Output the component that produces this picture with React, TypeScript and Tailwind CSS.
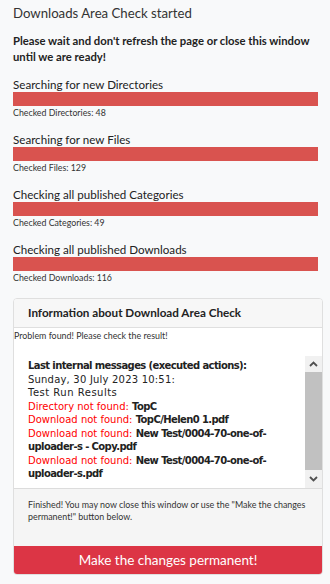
import React from "react";

const sans = "font-['Lato',sans-serif]";
const verdana = "font-['DejaVu_Sans',sans-serif]";

interface Step {
  title: string;
  checked: string;
}

const steps: Step[] = [
  { title: "Searching for new Directories", checked: "Checked Directories: 48" },
  { title: "Searching for new Files", checked: "Checked Files: 129" },
  { title: "Checking all published Categories", checked: "Checked Categories: 49" },
  { title: "Checking all published Downloads", checked: "Checked Downloads: 116" },
];

const ProgressStep = ({ step }: { step: Step }) => (
  <div className="mt-[13px] first:mt-[12px]">
    <div className="text-[11.6px] leading-[14px] text-[#222]">{step.title}</div>
    <div className="h-[14px] w-[305px] bg-[#d9534f]" />
    <div className="text-[8.8px] leading-[14px] text-[#333]">{step.checked}</div>
  </div>
);

const Missing = ({ label, path }: { label: string; path: string }) => (
  <div>
    <span className="text-[#ff0000]">{label} </span>
    <span className="font-bold text-[#222] tracking-[-0.6px]">{path}</span>
  </div>
);

const Scrollbar = () => (
  <div className="w-[17px] flex flex-col bg-[#f1f1f1]">
    <div className="h-[16px] flex items-center justify-center">
      <svg width="9" height="6" viewBox="0 0 9 6">
        <path d="M1 5 L4.5 1.5 L8 5" fill="none" stroke="#505050" strokeWidth="1.8" />
      </svg>
    </div>
    <div className="flex-1 bg-[#c1c1c1]" />
    <div className="h-[18px] flex items-center justify-center">
      <svg width="9" height="6" viewBox="0 0 9 6">
        <path d="M1 1 L4.5 4.5 L8 1" fill="none" stroke="#505050" strokeWidth="1.8" />
      </svg>
    </div>
  </div>
);

export default function App() {
  return (
    <div className={`min-h-[584px] w-[330px] bg-[#f8f9fa] px-[13px] pt-[3px] ${sans}`}>
      <h1 className="text-[13.2px] leading-[20px] font-normal text-[#333]">
        Downloads Area Check started
      </h1>
      <p className="mt-[10px] text-[11.3px] leading-[16px] font-bold text-[#222]">
        Please wait and don't refresh the page or close this window until we are ready!
      </p>

      {steps.map((s, idx) => (
        <ProgressStep key={idx} step={s} />
      ))}

      <div className="mt-[13px] w-[310px] rounded-[4px] border border-[#dfdfdf] bg-white overflow-hidden">
        <div className="h-[29px] bg-[#f7f7f7] border-b border-[#dfdfdf] flex items-center pl-[14px]">
          <span className="text-[11.7px] font-bold text-[#222]">Information about Download Area Check</span>
        </div>
        <div className="pt-[1px] text-[8.9px] leading-[13px] text-[#333]">
          Problem found! Please check the result!
        </div>
        <div className="mt-[14px] h-[133px] flex border-b border-[#dcdcdc]">
          <div className={`flex-1 pl-[14px] pt-[3px] text-[10px] leading-[13.5px] text-[#222] ${verdana}`}>
            <div className="font-bold tracking-[-0.6px]">Last internal messages (executed actions):</div>
            <div className="tracking-[0.2px]">Sunday, 30 July 2023 10:51:</div>
            <div className="tracking-[0.5px]">Test Run Results</div>
            <Missing label="Directory not found:" path="TopC" />
            <Missing label="Download not found:" path="TopC/Helen0 1.pdf" />
            <Missing label="Download not found:" path="New Test/0004-70-one-of-uploader-s - Copy.pdf" />
            <Missing label="Download not found:" path="New Test/0004-70-one-of-uploader-s.pdf" />
          </div>
          <Scrollbar />
        </div>
        <div className="bg-[#f5f5f5] pl-[14px] pr-[8px] pt-[10px] pb-[23px] text-[8.9px] leading-[12px] text-[#333]">
          Finished! You may now close this window or use the "Make the changes permanent!" button below.
        </div>
        <button className="block w-full h-[28px] bg-[#dc3545] text-white text-[13.5px] leading-[28px] text-center">
          Make the changes permanent!
        </button>
      </div>
    </div>
  );
}
